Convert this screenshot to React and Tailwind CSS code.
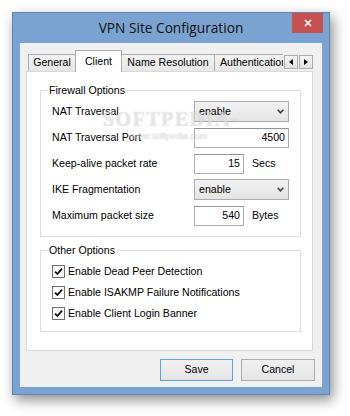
import React from 'react';

const sans = "font-['Liberation_Sans',Arial,sans-serif]";

function Combo({ value }) {
  return (
    <div className="flex items-center justify-between w-[95px] h-[21px] border border-[#acacac] bg-linear-to-b from-[#f2f2f2] to-[#e4e4e4] pl-[4px] pr-[4px]">
      <span>{value}</span>
      <svg width="7" height="5" viewBox="0 0 7 5">
        <path d="M0.7 0.7 L3.5 3.8 L6.3 0.7" stroke="#404040" strokeWidth="1.6" fill="none" />
      </svg>
    </div>
  );
}

function Field({ value, w = 'w-[95px]' }) {
  return (
    <div className={`${w} h-[20px] border border-[#abadb3] border-t-[#8f939c] bg-white flex items-center justify-end pr-[3px]`}>
      {value}
    </div>
  );
}

function Check({ label }) {
  return (
    <div className="flex items-center h-[21px]">
      <div className="w-[13px] h-[13px] border border-[#707070] bg-linear-to-b from-[#f4f4f4] to-[#ffffff] flex items-center justify-center">
        <svg width="9" height="9" viewBox="0 0 9 9">
          <path d="M1 4.6 L3.4 7 L8 1.6" stroke="#111" strokeWidth="1.8" fill="none" />
        </svg>
      </div>
      <span className="ml-[3px]">{label}</span>
    </div>
  );
}

function Row({ label, children }) {
  return (
    <div className="flex items-center h-[21px]">
      <span className="w-[142px]">{label}</span>
      {children}
    </div>
  );
}

function Arrow({ dir }) {
  return (
    <div className="w-[14px] h-[14px] border border-[#acacac] bg-linear-to-b from-[#f4f4f4] to-[#e3e3e3] flex items-center justify-center">
      <svg width="4" height="6" viewBox="0 0 4 6">
        {dir === 'left'
          ? <path d="M4 0 L0 3 L4 6 Z" fill="#000" />
          : <path d="M0 0 L4 3 L0 6 Z" fill="#000" />}
      </svg>
    </div>
  );
}

export default function App() {
  const tabBase = 'h-[17px] flex items-center bg-linear-to-b from-[#f3f3f3] to-[#e6e6e6] border-[#acacac] whitespace-nowrap';

  return (
    <div className={`relative w-[350px] h-[416px] bg-white pl-[12px] pt-[12px] text-[10.6px] text-black ${sans}`}>
      {/* WINDOW */}
      <div className="w-[318px] h-[383px] bg-[#7ba3d2] border border-[#5f86b7] shadow-[3px_5px_12px_rgba(0,0,0,0.45)] flex flex-col">
        {/* TITLE BAR */}
        <div className="relative h-[30px] flex items-center justify-center">
          <span className="font-['Open_Sans',sans-serif] text-[13.7px] text-[#111] pt-[1px]">VPN Site Configuration</span>
          <div className="absolute right-[6px] top-0 w-[31px] h-[20px] bg-[#c75050] flex items-center justify-center">
            <svg width="8" height="8" viewBox="0 0 8 8">
              <path d="M1 1 L7 7 M7 1 L1 7" stroke="#fff" strokeWidth="1.7" />
            </svg>
          </div>
        </div>

        {/* CLIENT AREA */}
        <div className="mx-[7px] mb-[7px] w-[302px] h-[344px] bg-[#f0f0f0] pt-[7px] pl-[6px]">
          {/* TAB STRIP */}
          <div className="w-[287px] h-[21px] flex items-end">
            <div className="w-[2px]" />
            <div className={`${tabBase} w-[47px] border-l border-t justify-center`}>General</div>
            <div className="relative z-10 w-[47px] h-[22px] -mb-px bg-white border border-b-0 border-[#acacac] flex justify-center pt-[3px]">Client</div>
            <div className={`${tabBase} w-[93px] border-t border-r justify-center`}>Name Resolution</div>
            <div className={`${tabBase} w-[68px] border-t overflow-hidden pl-[5px]`}>Authentication</div>
            <div className="flex gap-[1px] ml-[1px] mb-[2px]">
              <Arrow dir="left" />
              <Arrow dir="right" />
            </div>
          </div>

          {/* TAB PANEL */}
          <div className="w-[287px] h-[280px] border border-[#d9d9d9] bg-white pl-[13px] pr-[11px] flex flex-col">
            <fieldset className="mt-[12px] border border-[#dcdcdc]">
              <legend className="ml-[6px] px-[2px] leading-[13px]">Firewall Options</legend>
              <div className="pl-[11px] pt-[4px] pb-[10px] flex flex-col gap-[5px]">
                <Row label="NAT Traversal"><Combo value="enable" /></Row>
                <Row label="NAT Traversal Port"><Field value="4500" /></Row>
                <Row label="Keep-alive packet rate">
                  <Field value="15" w="w-[50px]" />
                  <span className="ml-[8px]">Secs</span>
                </Row>
                <Row label="IKE Fragmentation"><Combo value="enable" /></Row>
                <Row label="Maximum packet size">
                  <Field value="540" w="w-[50px]" />
                  <span className="ml-[8px]">Bytes</span>
                </Row>
              </div>
            </fieldset>

            <fieldset className="mt-[7px] border border-[#dcdcdc]">
              <legend className="ml-[6px] px-[2px] leading-[13px]">Other Options</legend>
              <div className="pl-[11px] pt-[4px] pb-[7px] flex flex-col">
                <Check label="Enable Dead Peer Detection" />
                <Check label="Enable ISAKMP Failure Notifications" />
                <Check label="Enable Client Login Banner" />
              </div>
            </fieldset>
          </div>

          {/* BUTTONS */}
          <div className="mt-[8px] pr-[7px] flex justify-end gap-[8px]">
            <button className="w-[73px] h-[22px] border border-[#5ea0e6] bg-linear-to-b from-[#f0f0f0] to-[#e5e5e5]">Save</button>
            <button className="w-[74px] h-[22px] border border-[#adadad] bg-linear-to-b from-[#f0f0f0] to-[#e5e5e5]">Cancel</button>
          </div>
        </div>
      </div>

      {/* WATERMARK */}
      <div className="absolute left-[103px] top-[104px] font-['Liberation_Serif',serif] font-bold text-[20px] tracking-[1.5px] text-white/60 [text-shadow:0_0_1px_rgba(0,0,0,0.25)] pointer-events-none">
        SOFTPEDIA<sup className="text-[6px] tracking-normal">™</sup>
      </div>
      <div className="absolute left-[130px] top-[130px] font-['Liberation_Sans',sans-serif] text-[9px] text-white/70 [text-shadow:0_0_1px_rgba(0,0,0,0.3)] pointer-events-none">
        www.softpedia.com
      </div>
    </div>
  );
}
